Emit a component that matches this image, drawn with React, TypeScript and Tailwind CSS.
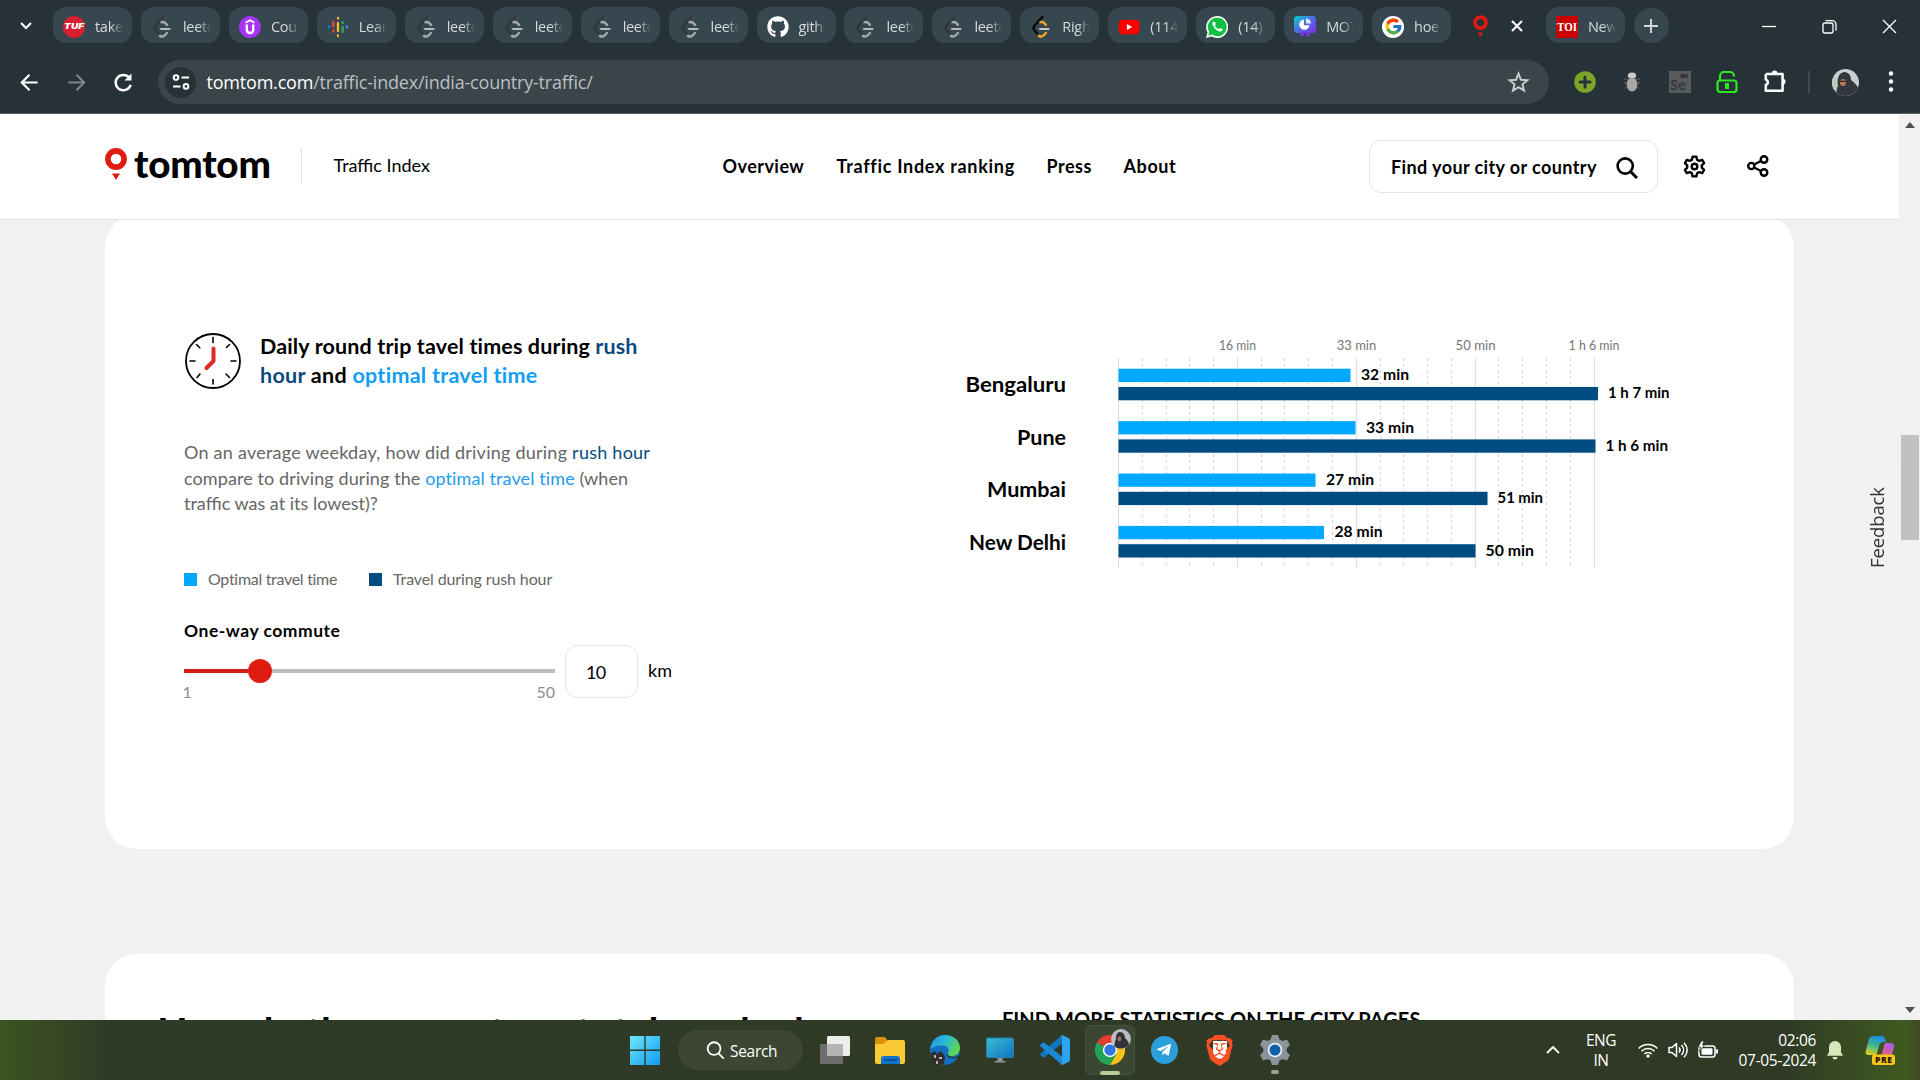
import React from "react";
import { FaGithub, FaYoutube, FaTelegramPlane } from "react-icons/fa";
import { FcGoogle } from "react-icons/fc";
import { SiBrave } from "react-icons/si";

const GEO = "font-['Lato','Liberation_Sans',sans-serif]";
const UI = "font-['Open_Sans','Noto_Sans',sans-serif]";

/* ---------- favicons ---------- */

function LeetCode({ color = false }: { color?: boolean }) {
  return (
    <svg viewBox="0 0 22 22" className="h-[22px] w-[22px]" fill="none" strokeLinecap="round" strokeWidth="2.5">
      <path d="M12.300 1.200 4.700 9.300c-1.500 1.700-1.500 3.700 0 5.400l2.600 2.800" stroke={color ? "#0b0b0b" : "#33383b"} />
      <path d="M10.500 6.200c1.500-.6 2.600-.3 3.600.7l1.800 1.900" stroke={color ? "#f5a12b" : "#a2a8ab"} />
      <path d="M9 20c1.800.8 3.600.5 5-1l1.900-2" stroke={color ? "#f5a12b" : "#a2a8ab"} />
      <path d="M10 13h8.500" stroke={color ? "#c8c8c8" : "#b4babd"} strokeWidth="2.200" />
    </svg>
  );
}

function TufIcon() {
  return (
    <svg viewBox="0 0 22 22" className="h-[22px] w-[22px]">
      <circle cx="11" cy="11" r="11" fill="#d81f30" />
      <text x="11" y="13.4" textAnchor="middle" fontSize="7.5" fontWeight="900" fontStyle="italic" fill="#fff" fontFamily="Inter" textLength="20" lengthAdjust="spacingAndGlyphs">
        TUF
      </text>
    </svg>
  );
}

function UdemyIcon() {
  return (
    <svg viewBox="0 0 22 22" className="h-[22px] w-[22px]" fill="none" stroke="#fff">
      <circle cx="11" cy="11" r="11" fill="#a435f0" stroke="none" />
      <path d="m6.600 6.800 4.400-2.600 4.400 2.600" strokeWidth="1.8" />
      <path d="M7.800 8.600v5.200a3.200 3.200 0 0 0 6.400 0V8.600" strokeWidth="2.4" />
    </svg>
  );
}

function PodcastIcon() {
  return (
    <svg viewBox="0 0 22 22" className="h-[22px] w-[22px]" strokeWidth="2.3" strokeLinecap="round">
      <path d="M11 2v.6M11 7v8M11 19.4v.6" stroke="#f9bb2d" />
      <path d="M6.4 5.6v5M6.4 14.5v1.3" stroke="#ea4335" />
      <path d="M15.6 6.2v1M15.6 11v5" stroke="#34a853" />
      <path d="M2 10.4v1" stroke="#1a73e8" />
      <path d="M20 10.4v1" stroke="#4285f4" />
    </svg>
  );
}

function ChartBadgeIcon() {
  return (
    <svg viewBox="0 0 22 22" className="h-[22px] w-[22px]">
      <defs>
        <linearGradient id="badge" x1="0" y1="0" x2="1" y2="1">
          <stop offset="0" stopColor="#05d0cf" />
          <stop offset=".5" stopColor="#4a6be8" />
          <stop offset="1" stopColor="#8a2be8" />
        </linearGradient>
      </defs>
      <rect width="22" height="17" rx="3.5" fill="url(#badge)" />
      <path d="m7 16-1 5 3-1 2-3 2 3 3 1-1-5z" fill="#7a35e0" />
      <path d="M10 3.400a5.200 5.200 0 1 0 5.600 5.800H10z" fill="#fff" />
      <path d="M12 2.400v5h5a5 5 0 0 0-5-5z" fill="#dfeaff" />
    </svg>
  );
}

function Pin({ className }: { className: string }) {
  return (
    <svg viewBox="0 0 22 32" className={className}>
      <circle cx="11" cy="11" r="8.1" fill="none" stroke="#df1b12" strokeWidth="5.6" />
      <path d="M7 25.4h8l-4 6.6z" fill="#df1b12" />
    </svg>
  );
}

function ToiIcon() {
  return (
    <svg viewBox="0 0 22 22" className="h-[22px] w-[22px]">
      <rect width="22" height="22" fill="#c90000" />
      <text x="11" y="14.6" textAnchor="middle" fontSize="11.5" fontWeight="700" fill="#fff" fontFamily="Liberation Serif" textLength="20" lengthAdjust="spacingAndGlyphs">
        TOI
      </text>
    </svg>
  );
}

function YouTubeIcon() {
  return (
    <span className="relative flex h-[22px] w-[22px] items-center justify-center">
      <span className="absolute h-2.5 w-2.5 bg-white" />
      <FaYoutube className="relative h-[22px] w-[22px] text-[#f00]" />
    </span>
  );
}

function WhatsAppIcon() {
  return (
    <svg viewBox="0 0 22 22" className="h-[22px] w-[22px]">
      <path d="M11 0a11 11 0 0 0-9.5 16.4L0 22l5.7-1.5A11 11 0 1 0 11 0z" fill="#f4fff6" />
      <path d="M11 1.8a9.2 9.2 0 0 0-7.8 14L2.300 19.700l4-1.100A9.200 9.200 0 1 0 11 1.800z" fill="#0fc143" />
      <path d="M7.400 5.600c-1.500 1-1.300 3.200.7 5.800 2.200 3 5 4.500 6.800 4 1.500-.5 2-1.800 1.600-2.300l-2.300-1.200-1.300 1.400c-2-.8-3.200-2-4-3.800l1-1.300-1-2.400z" fill="#fff" />
    </svg>
  );
}

function GoogleIcon() {
  return (
    <span className="flex h-[22px] w-[22px] items-center justify-center rounded-full bg-white">
      <FcGoogle className="h-[19px] w-[19px]" />
    </span>
  );
}

const leet = { icon: <LeetCode />, label: "leetc" };

const tabs: { icon: React.ReactNode; label: string }[] = [
  { icon: <TufIcon />, label: "take" },
  leet,
  { icon: <UdemyIcon />, label: "Cou" },
  { icon: <PodcastIcon />, label: "Lear" },
  leet,
  leet,
  leet,
  leet,
  { icon: <FaGithub className="h-[22px] w-[22px] text-white" />, label: "gith" },
  leet,
  leet,
  { icon: <LeetCode color />, label: "Righ" },
  { icon: <YouTubeIcon />, label: "(114" },
  { icon: <WhatsAppIcon />, label: "(14)" },
  { icon: <ChartBadgeIcon />, label: "MOT" },
  { icon: <GoogleIcon />, label: "hoe" },
];

function Tab({ icon, label }: { icon: React.ReactNode; label: string }) {
  return (
    <div className="mr-[8.950px] flex h-9 w-[79px] shrink-0 items-center rounded-[13px] bg-[#37474f] pt-[3px] pl-2.5">
      {icon}
      <span className="ml-[10px] w-[28px] overflow-hidden pt-px text-[14.5px] leading-5 tracking-[-0.3px] whitespace-nowrap text-[#d5dadc] [mask-image:linear-gradient(90deg,#000_55%,transparent)]">
        {label}
      </span>
    </div>
  );
}

function TabStrip() {
  return (
    <div className="flex h-[51px] items-start pt-[7px]">
      <svg viewBox="0 0 12 12" className="mt-[13px] ml-5 h-3 w-3" fill="none" stroke="#fff" strokeWidth="2.2">
        <path d="m1 3 5 5 5-5" />
      </svg>
      <div className="ml-[21px] flex">
        {tabs.map((t, i) => (
          <Tab key={i} {...t} />
        ))}
        <div className="flex h-9 w-[86px] items-center pt-[2px] pl-[13px]">
          <Pin className="h-[22px] w-[15px]" />
          <svg viewBox="0 0 12 12" className="ml-[23px] h-3 w-3" fill="none" stroke="#fff" strokeWidth="2.1">
            <path d="m1 1 10 10M11 1 1 11" />
          </svg>
        </div>
        <Tab icon={<ToiIcon />} label="New" />
        <div className="mt-px flex h-[35px] w-[35px] items-center justify-center rounded-full bg-[#37474f]">
          <svg viewBox="0 0 14 14" className="h-3.5 w-3.5" stroke="#d5dadc" strokeWidth="1.9">
            <path d="M7 0v14M0 7h14" />
          </svg>
        </div>
      </div>
      <svg viewBox="0 0 140 16" className="mt-[12px] ml-[92px] h-4 w-[140px]" fill="none" stroke="#fff" strokeWidth="1.3">
        <path d="M1 7.500h14" />
        <rect x="62" y="4" width="10" height="10" rx="2" />
        <path d="M64.500 1.600h6.500a4 4 0 0 1 4 4v6.200" />
        <path d="m122 1 13 13M135 1l-13 13" />
      </svg>
    </div>
  );
}

function Toolbar() {
  return (
    <div className="flex h-[62px] items-center">
      <svg viewBox="0 0 24 24" className="ml-[18px] h-[23px] w-[23px]" fill="none" stroke="#fff" strokeWidth="2.300">
        <path d="M20.500 12H4M12 4l-8 8 8 8" />
      </svg>
      <svg viewBox="0 0 24 24" className="ml-6 h-[23px] w-[23px]" fill="none" stroke="#7d858a" strokeWidth="2.300">
        <path d="M3.500 12H20M12 4l8 8-8 8" />
      </svg>
      <svg viewBox="0 0 24 24" className="ml-[24px] h-[23px] w-[23px]" fill="none" stroke="#fff" strokeWidth="2.600">
        <path d="M19.500 14.500A8 8 0 1 1 18 7" />
        <path d="M20.300 2.500v7.300H13z" fill="#fff" stroke="none" />
      </svg>
      <div className="ml-[23px] flex h-11 w-[1391px] items-center rounded-full bg-[#3a4449] pl-[7px]">
        <div className="flex h-[31px] w-[31px] items-center justify-center rounded-full bg-[#263238]">
          <svg viewBox="0 0 18 16" className="h-4 w-[18px]" fill="none" stroke="#fff" strokeWidth="2">
            <circle cx="4" cy="3.600" r="2.300" />
            <path d="M9.500 3.600H17M1 12.400h7.500" />
            <circle cx="14" cy="12.400" r="2.300" />
          </svg>
        </div>
        <span className="ml-[10.500px] flex-1 text-[18px] leading-6 tracking-[-0.2px] whitespace-nowrap text-[#b9c0c3]">
          <span className="text-white">tomtom.com</span>/traffic-index/india-country-traffic/
        </span>
        <svg viewBox="0 0 24 24" className="mr-[19px] h-[23px] w-[23px]" fill="none" stroke="#c8cdd0" strokeWidth="2">
          <path d="m12 2.800 2.500 6.300 6.800.5-5.200 4.300 1.700 6.600L12 16.900l-5.800 3.600 1.700-6.600-5.200-4.300 6.800-.5z" />
        </svg>
      </div>
      <svg viewBox="0 0 22 22" className="ml-[24.500px] h-[22px] w-[22px]">
        <circle cx="11" cy="11" r="10.800" fill="#7ba428" />
        <path d="M11 6v10M6 11h10" stroke="#263238" strokeWidth="3" strokeLinecap="round" />
      </svg>
      <svg viewBox="0 0 22 22" className="ml-[25px] h-[22px] w-[22px]">
        <path d="M3 8h4M2.500 12h4M4 17l3-1M19 8h-4M19.500 12h-4M18 17l-3-1" stroke="#4a545a" strokeWidth="1.500" />
        <ellipse cx="11" cy="4.500" rx="4.200" ry="3" fill="#c9c9c9" />
        <ellipse cx="11" cy="13.500" rx="5.300" ry="7" fill="#a9a6a4" />
      </svg>
      <svg viewBox="0 0 22 22" className="ml-[26px] h-[22px] w-[22px]">
        <rect width="22" height="22" fill="#57595b" />
        <text x="1" y="19" fontSize="14" fontWeight="700" fill="#353c41" fontFamily="Open Sans">Se</text>
        <path d="M11.500 3h5v4h-5zM16 5l3-2v4z" fill="#30373b" />
      </svg>
      <svg viewBox="0 0 22 22" className="ml-[25px] h-[22px] w-[22px]" fill="none" stroke="#2fe81f" strokeWidth="2.200">
        <rect x="1.500" y="9.500" width="19" height="11.500" rx="2.500" />
        <path d="M4 9.500V5a4 4 0 0 1 4-4h6a4 4 0 0 1 4 4v.5" />
        <path d="M11 12v6" strokeWidth="4" />
      </svg>
      <svg viewBox="0 0 24 24" className="-mt-0.5 ml-[24px] h-[26px] w-[26px]" fill="none" stroke="#fff" strokeWidth="2.300" strokeLinejoin="round">
        <path d="M3.500 5.500h15.500v5.200M19 15v6H3.500v-5.300a2.600 2.600 0 0 0 0-5V5.500" />
        <path d="M9 5a2.700 2.700 0 0 1 5.400 0zM19 10a2.700 2.700 0 0 1 0 5.400z" fill="#fff" stroke="none" />
        <path d="M19 10v6" />
      </svg>
      <div className="ml-[20px] h-[22px] w-[2px] bg-[#3d4a51]" />
      <svg viewBox="0 0 27 27" className="ml-[22px] h-[27px] w-[27px]">
        <defs>
          <clipPath id="avatarClip"><circle cx="13.500" cy="13.500" r="13.500" /></clipPath>
        </defs>
        <g clipPath="url(#avatarClip)">
          <rect width="27" height="27" fill="#c9ced2" />
          <path d="M0 10 6 8l2 8-8 6z" fill="#b9cbb6" />
          <path d="M4 27c1-4 0-7 2-10-1-6 0-13 6-14 5 0 7 4 7 8 3 2 6 5 8 10v6z" fill="#33363c" />
          <ellipse cx="11" cy="13.500" rx="3" ry="3.600" fill="#b47a5e" />
          <path d="M8 12.300h6" stroke="#222" strokeWidth="1.300" />
        </g>
      </svg>
      <svg viewBox="0 0 6 24" className="ml-[29.500px] h-6 w-1.5" fill="#fff">
        <circle cx="3" cy="3.500" r="2.200" />
        <circle cx="3" cy="11.500" r="2.200" />
        <circle cx="3" cy="19.500" r="2.200" />
      </svg>
    </div>
  );
}

/* ---------- site ---------- */

function SiteHeader() {
  return (
    <header className="flex h-[106px] w-[1899px] items-start border-b border-[#e2e2e2] bg-white pt-[26px] text-black">
      <Pin className="mt-[8px] ml-[105px] h-8 w-[22px]" />
      <span className="mt-[0.500px] ml-[7px] w-[140px] text-[38.500px] leading-[44px] font-black tracking-[-0.2px]">tomtom</span>
      <div className="mt-2 ml-[27px] h-9 w-px bg-[#e2e2e2]" />
      <span className="mt-[13px] ml-[31.500px] w-[389px] text-[18px] leading-6">Traffic Index</span>
      <nav className="mt-[14px] flex text-[18px] leading-6 font-bold whitespace-nowrap">
        <span className="w-[114px] tracking-[0.46px]">Overview</span>
        <span className="w-[210px] tracking-[0.7px]">Traffic Index ranking</span>
        <span className="w-[77px] tracking-[0.5px]">Press</span>
        <span className="w-[245.500px] tracking-[0.6px]">About</span>
      </nav>
      <div className="flex h-[53px] w-[289px] items-center justify-between rounded-xl border border-[#e4e4e4] pr-[19px] pl-[21px]">
        <span className="mt-0.5 text-[18px] font-bold tracking-[0.4px] whitespace-nowrap">Find your city or country</span>
        <svg viewBox="0 0 22 22" className="mt-0.5 h-[22px] w-[22px]" fill="none" stroke="#000" strokeWidth="2.600">
          <circle cx="9.200" cy="9" r="7.600" />
          <path d="m14.500 14.500 6.500 6.500" strokeWidth="3" />
        </svg>
      </div>
      <svg viewBox="0 0 24 24" className="mt-[14px] ml-[24px] h-[25px] w-[25px]" fill="none" stroke="#000" strokeWidth="2.300" strokeLinejoin="round">
        <path d="M10.200 2.500h3.600l.7 3 1.900 1.100 3-.9 1.800 3.100-2.200 2.100v2.200l2.200 2.100-1.800 3.100-3-.9-1.900 1.100-.7 3h-3.600l-.7-3-1.900-1.100-3 .9-1.800-3.100L5 13.100v-2.200L2.800 8.800l1.800-3.100 3 .9 1.900-1.100z" />
        <circle cx="12" cy="12" r="2.700" />
      </svg>
      <svg viewBox="0 0 22 22" className="mt-[15px] ml-[40px] h-[22px] w-[22px]" fill="none" stroke="#000" strokeWidth="2.400">
        <circle cx="4.300" cy="11" r="3.100" />
        <circle cx="17" cy="4.500" r="3.300" />
        <circle cx="17" cy="17.500" r="3.300" />
        <path d="m7 9.500 7-3.500M7 12.500l7 3.500" />
      </svg>
    </header>
  );
}

function Clock() {
  return (
    <svg viewBox="0 0 56 56" className="ml-px h-14 w-14" fill="none" stroke="#000">
      <circle cx="28" cy="28" r="27" strokeWidth="1.800" />
      <g strokeWidth="1.600" strokeLinecap="round">
        <path d="M28 4.500v5M28 46.500v4.500M5 28h5M46 28h5" />
        <path d="m11.500 11.500 3.300 3.300M41.500 14.500l3-3M12 44.500l3-3.500M41 41l3.500 3.500" />
      </g>
      <path d="M28.500 15.500v12.500l-7 7" stroke="#df2a26" strokeWidth="4" strokeLinecap="round" strokeLinejoin="round" />
    </svg>
  );
}

const cities = [
  { name: "Bengaluru", w: 100.500, opt: 232, optL: "32 min", rush: 479.500, rushL: "1 h 7 min", rw: 61.500 },
  { name: "Pune", w: 49, opt: 237, optL: "33 min", rush: 477, rushL: "1 h 6 min", rw: 62.500 },
  { name: "Mumbai", w: 79, opt: 197, optL: "27 min", rush: 369, rushL: "51 min", rw: 45.500 },
  { name: "New Delhi", w: 97, opt: 205.500, optL: "28 min", rush: 357, rushL: "50 min", rw: 48.500 },
];
const axis = [
  { x: 119, l: "16 min", w: 37 },
  { x: 238, l: "33 min", w: 39.500 },
  { x: 357, l: "50 min", w: 40 },
  { x: 475.500, l: "1 h 6 min", w: 51 },
];

function TravelChart() {
  return (
    <svg width="760" height="260" viewBox="0 0 760 260" fontFamily="Lato, Liberation Sans, sans-serif">
      <g transform="translate(179.500 0)">
        {Array.from({ length: 21 }, (_, i) => {
          const major = i % 5 === 0;
          return (
            <line
              key={i}
              x1={Math.round(i * 23.780)}
              x2={Math.round(i * 23.780)}
              y1="38"
              y2="248"
              stroke={major ? "#dcdee0" : "#d8dadc"}
              strokeWidth="1.200"
              strokeDasharray={major ? undefined : "3 3"}
            />
          );
        })}
        {axis.map((a) => (
          <text key={a.l} x={a.x} y="30" textAnchor="middle" fontSize="13.500" fill="#767676" textLength={a.w} lengthAdjust="spacingAndGlyphs">
            {a.l}
          </text>
        ))}
        {cities.map((c, i) => {
          const y = 48.700 + i * 52.400;
          return (
            <g key={c.name} fontWeight="700">
              <text x="-52.500" y={y + 23.700} textAnchor="end" fontSize="21.500" textLength={c.w} lengthAdjust="spacingAndGlyphs">
                {c.name}
              </text>
              <rect x="0" y={y} width={c.opt} height="13.300" fill="#00a8ff" />
              <rect x="0" y={y + 18.300} width={c.rush} height="13.300" fill="#004b7f" />
              <text x={c.opt + 10.500} y={y + 11.400} fontSize="15.500" textLength="48" lengthAdjust="spacingAndGlyphs">
                {c.optL}
              </text>
              <text x={c.rush + 10} y={y + 29.700} fontSize="15.500" textLength={c.rw} lengthAdjust="spacingAndGlyphs">
                {c.rushL}
              </text>
            </g>
          );
        })}
      </g>
    </svg>
  );
}

function TravelCard() {
  return (
    <section className="-mt-[5px] flex h-[634px] w-[1689px] rounded-[32px] bg-white">
      <div className="ml-[79px] w-[755px] pt-[118px]">
        <div className="flex h-14">
          <Clock />
          <h2 className="-mt-px ml-[19px] text-[21.500px] leading-[29px] font-bold tracking-[0.14px] whitespace-nowrap text-black">
            Daily round trip tavel times during <span className="text-[#0b4a7f]">rush</span>
            <br />
            <span className="tracking-[0.28px]">
              <span className="text-[#0b4a7f]">hour</span> and <span className="text-[#109df5]">optimal travel time</span>
            </span>
          </h2>
        </div>
        <p className="mt-[51px] text-[18px] leading-[25.500px] tracking-[0.24px] whitespace-nowrap text-[#666]">
          On an average weekday, how did driving during <span className="text-[#0b4a7f]">rush hour</span>
          <br />
          <span className="tracking-[0.1px]">
            compare to driving during the <span className="text-[#1f9bf0]">optimal travel time</span> (when
          </span>
          <br />
          <span className="tracking-[0px]">traffic was at its lowest)?</span>
        </p>
        <div className="mt-[50.500px] flex h-6 items-center text-[16px] text-[#666]">
          <i className="h-[13px] w-[13px] bg-[#00a8ff]" />
          <span className="-mt-px ml-[11px] w-[161px] tracking-[-0.3px]">Optimal travel time</span>
          <i className="h-[13px] w-[13px] bg-[#004b7f]" />
          <span className="-mt-px ml-[11px] tracking-[-0.12px]">Travel during rush hour</span>
        </div>
        <div className="mt-[28px] text-[17.500px] leading-6 font-bold tracking-[0.52px] text-black">One-way commute</div>
        <div className="mt-[2px] flex">
          <div className="w-[371px] pt-[14px]">
            <div className="flex h-6 items-center">
              <div className="h-1 w-[63.500px] bg-[#d31d17]" />
              <div className="h-6 w-6 rounded-full bg-[#df1b12]" />
              <div className="h-1 flex-1 bg-[#bdbdbd]" />
            </div>
            <div className="-mt-px flex justify-between text-[16px] leading-5 text-[#8d8d8d]">
              <span className="-ml-[1.5px]">1</span>
              <span>50</span>
            </div>
          </div>
          <div className="ml-2.5 h-[53px] w-[73px] rounded-xl border border-[#e4e4e4] pt-[14px] pl-[20px] text-[18px] leading-6 tracking-[-0.7px] text-black">10</div>
          <span className="mt-[13px] ml-[10px] text-[18px] leading-6 text-black">km</span>
        </div>
      </div>
      <div className="pt-[105px]">
        <TravelChart />
      </div>
    </section>
  );
}

function NextCard() {
  return (
    <section className="mt-[105px] flex h-[66px] w-[1689px] overflow-hidden rounded-t-[32px] bg-white font-bold whitespace-nowrap text-black">
      <h2 className="ml-[52px] flex w-[845px] pt-[54px] text-[40px] leading-[48px]">
        <span className="w-[259px]">How do the </span>
        <span className="w-[160px]">most </span>
        <span className="w-[109px]">total </span>
        <span className="w-[109px]">rush </span>
        <span>hour</span>
      </h2>
      <h3 className="pt-[51px] text-[20px] leading-7 tracking-[0.05px]">FIND MORE STATISTICS ON THE CITY PAGES</h3>
    </section>
  );
}

function Scrollbar() {
  return (
    <div className="flex h-[906px] w-[21px] flex-col items-center bg-[#f1f1f1]">
      <div className="mt-[8px] border-x-[5px] border-b-[6px] border-x-transparent border-b-[#505050]" />
      <div className="mt-[307px] h-[105px] w-[18px] bg-[#c1c1c1]" />
      <div className="mt-[467px] border-x-[5px] border-t-[6px] border-x-transparent border-t-[#505050]" />
    </div>
  );
}

/* ---------- taskbar ---------- */

function TaskbarApps() {
  return (
    <div className="flex h-[60px] items-center">
      <svg viewBox="0 0 30 30" className="ml-[630px] h-[30px] w-[30px]">
        <defs>
          <linearGradient id="win" x1="0" y1="0" x2="1" y2="1">
            <stop offset="0" stopColor="#6fe8fb" />
            <stop offset="1" stopColor="#0f9bf2" />
          </linearGradient>
        </defs>
        <path d="M0 1h14.300v13.500H0zM15.700 1H30v13.500H15.700zM0 16h14.300v14H0zM15.700 16H30v14H15.700z" fill="url(#win)" />
      </svg>
      <div className="ml-[18px] flex h-10 w-[125px] items-center rounded-full bg-[#3c4633] pl-[27.500px] text-[15.500px] text-white">
        <svg viewBox="0 0 20 20" className="h-[19px] w-[19px] shrink-0" fill="none" stroke="#fff" strokeWidth="1.900">
          <circle cx="8.500" cy="8" r="6.700" />
          <path d="m13.200 13 5.500 5.500" />
        </svg>
        <span className="mt-1 ml-[5.500px] tracking-[-0.3px]">Search</span>
      </div>
      <svg viewBox="0 0 30 30" className="ml-[17px] h-[30px] w-[30px]">
        <rect x="0" y="9" width="23" height="20" rx="1.500" fill="#6d6d6d" />
        <rect x="7" y="1" width="23" height="20" rx="1.500" fill="#ededed" />
        <rect x="7" y="9" width="16" height="12" fill="#b5b5b5" />
      </svg>
      <svg viewBox="0 0 30 30" className="ml-[25px] h-[30px] w-[30px]">
        <path d="M0 4a2 2 0 0 1 2-2h8l3 4-3 4H0z" fill="#d9920d" />
        <path d="M0 9h8l5-4h15a2 2 0 0 1 2 2v20a2 2 0 0 1-2 2H2a2 2 0 0 1-2-2z" fill="#fbc934" />
        <path d="M6 29v-5a3 3 0 0 1 3-3h13a3 3 0 0 1 3 3v5z" fill="#1173c7" />
        <path d="M9 25h13" stroke="#0a4c8c" strokeWidth="1.600" />
      </svg>
      <svg viewBox="0 0 30 30" className="ml-[25px] h-[30px] w-[30px]">
        <defs>
          <linearGradient id="edge" x1="0" y1="0" x2="1" y2=".5">
            <stop offset="0" stopColor="#1b8fe0" />
            <stop offset=".5" stopColor="#27b8d8" />
            <stop offset="1" stopColor="#5fd84f" />
          </linearGradient>
        </defs>
        <circle cx="15" cy="15" r="14.800" fill="#1370c4" />
        <path d="M.3 14C1 6 7 0 15 0c9 0 15 6 15 13 0 5-4 8-8.500 8-3.500 0-4.500-1.500-3.500-3 1.500-2.500 1-7-4.500-7.500C8 10 3 12 .3 14z" fill="url(#edge)" />
        <path d="M17.500 18.500c0 2.500 6 5.500 11.500 2.200l1 1.300-4 1.200c-4 .8-8-.5-9-2.700-.5-1-.3-1.500.5-2z" fill="#2f3a27" />
        <path d="m1 18 4-2 2 3 3-3 3 2 2 4-1 7H3z" fill="#2b2f33" />
        <path d="M4 20h2v3H4zM9 22h3v2H9zM6 26h2v3H6z" fill="#c6a79a" />
      </svg>
      <svg viewBox="0 0 28 30" className="ml-[26px] h-[30px] w-7">
        <defs>
          <linearGradient id="mon" x1="0" y1="0" x2="1" y2="1">
            <stop offset="0" stopColor="#35bfd0" />
            <stop offset="1" stopColor="#1272c4" />
          </linearGradient>
        </defs>
        <rect x=".5" y="3" width="27" height="19.500" rx="1" fill="url(#mon)" stroke="#2a7fa8" />
        <path d="M11.500 23h5v3h3v1.500h-11V26h3z" fill="#8e979b" />
      </svg>
      <svg viewBox="0 0 30 30" className="ml-[26px] h-[30px] w-[30px]">
        <path d="M22 0v8.500L4.500 22.200a1.500 1.500 0 0 1-1.900 0L.6 20.400a1.300 1.300 0 0 1 0-1.900z" fill="#1276be" />
        <path d="M22 30v-8.500L4.500 7.800a1.500 1.500 0 0 0-1.900 0L.6 9.600a1.300 1.300 0 0 0 0 1.900z" fill="#1a8ad4" />
        <path d="M22 30c-.8 0-1.300-.3-1.800-.8.8.8 1.800.3 1.800-.8V1.600c0-1.100-1-1.600-1.800-.8.500-.6 1.200-.9 2.100-.7L28.500 3c.9.400 1.500 1.200 1.500 2.200v19.600c0 1-.6 1.800-1.500 2.200z" fill="#2ba4ee" />
      </svg>
      <div className="relative ml-[15px] flex h-[50px] w-[50px] items-center justify-center rounded-md border border-[#475140] bg-[#3b4633]">
        <svg viewBox="0 0 30 30" className="h-[30px] w-[30px]">
          <path d="M15 15 2 7.500A15 15 0 0 1 28 7.500z" fill="#e33b2e" />
          <path d="M15 15 2 7.500A15 15 0 0 0 15 30l6.500-11z" fill="#23a455" />
          <path d="M15 15 28 7.500A15 15 0 0 1 15 30l6.500-11z" fill="#fbc116" />
          <circle cx="15" cy="15" r="7.200" fill="#fff" />
          <circle cx="15" cy="15" r="5.700" fill="#3277e3" />
        </svg>
        <svg viewBox="0 0 20 20" className="absolute top-[3px] right-[3px] h-5 w-5">
          <circle cx="10" cy="10" r="10" fill="#b9bdc1" />
          <path d="M3 17c1-3 1-5 2-7 0-4 1-7 4-7s5 3 5 6c2 2 4 4 4 7-4 4-10 5-15 1z" fill="#303238" />
          <ellipse cx="8.500" cy="10" rx="1.900" ry="2.400" fill="#9d725e" />
        </svg>
        <div className="absolute -bottom-px h-1 w-5 rounded-full bg-[#b7cc97]" />
      </div>
      <div className="ml-[16px] flex h-7 w-[27px] items-center justify-center rounded-full bg-[#2a9fdb]">
        <FaTelegramPlane className="mr-0.5 h-4 w-4 text-white" />
      </div>
      <div className="relative ml-[26px] flex h-[30px] w-[31px] items-center justify-center">
        <div className="absolute top-[6px] h-[18px] w-[14px] rounded-b-full bg-white" />
        <SiBrave className="relative h-[31px] w-[31px] text-[#fb4f24]" />
      </div>
      <div className="relative ml-[24px] flex h-[60px] w-8 items-center justify-center">
        <svg viewBox="0 0 30 30" className="h-[30px] w-[30px]">
          <path d="m12 0 6 0 1.500 4.500 3 1.500 4.500-1.500 3 5.500-3.300 3.300v3.400L30 20l-3 5.500-4.500-1.500-3 1.500L18 30h-6l-1.500-4.500-3-1.500L3 25.500 0 20l3.300-3.300v-3.400L0 10l3-5.500L7.500 6l3-1.500z" fill="#8b939b" />
          <circle cx="15" cy="15" r="7.300" fill="#e8eef3" />
          <circle cx="15" cy="15" r="5.500" fill="#0e5fa8" />
        </svg>
        <div className="absolute bottom-[6px] h-1 w-2 rounded-full bg-[#9aa392]" />
      </div>
    </div>
  );
}

function Tray() {
  return (
    <div className="flex h-[60px] items-center text-[15.500px] leading-5 text-white">
      <svg viewBox="0 0 14 8" className="h-2 w-3.5" fill="none" stroke="#fff" strokeWidth="1.900">
        <path d="m1 7 6-6 6 6" />
      </svg>
      <div className="ml-[25px] w-[32px] text-center leading-[20px] tracking-[-0.5px]">
        ENG
        <br />
        IN
      </div>
      <svg viewBox="0 0 20 16" className="ml-[21px] h-4 w-5" fill="none" stroke="#fff" strokeWidth="1.500">
        <path d="M.7 6.500a13 13 0 0 1 18.600 0M3.500 9.300a9.200 9.200 0 0 1 13 0M6.300 12a5.200 5.200 0 0 1 7.400 0" />
        <circle cx="10" cy="14" r="1.700" fill="#fff" stroke="none" />
      </svg>
      <svg viewBox="0 0 20 18" className="ml-[10px] h-[18px] w-5" fill="none" stroke="#fff" strokeWidth="1.500">
        <path d="M1 6.500h3l4.500-4v13L4 11.500H1z" strokeLinejoin="round" />
        <path d="M11 6.500c1.300 1.500 1.300 3.500 0 5M13.500 4c2.800 3 2.800 7 0 10M16 1.700c4.200 4.500 4.200 10.200 0 14.600" />
      </svg>
      <svg viewBox="0 0 20 17" className="-mt-0.5 ml-[10px] h-[17px] w-5">
        <rect x="1" y="5" width="16" height="11" rx="2.500" fill="none" stroke="#fff" strokeWidth="1.500" />
        <rect x="3.500" y="7.300" width="11" height="6.500" rx="1" fill="#fff" />
        <path d="M18 8.500h2v4h-2z" fill="#fff" />
        <path d="M3.500 0 0 6h2.500L1.500 10.500 6.500 4H4.500L6 0z" fill="#fff" stroke="#2f3a27" strokeWidth=".8" />
      </svg>
      <div className="w-[98px] text-right leading-[20px] tracking-[-0.35px]">
        02:06
        <br />
        07-05-2024
      </div>
      <svg viewBox="0 0 16 20" className="ml-[11px] h-5 w-4" fill="#d9e8ba">
        <path d="M8 1a6 6 0 0 0-6 6v5L0 15.800h16L14 12V7a6 6 0 0 0-6-6zM5.500 17h5a2.500 2.500 0 0 1-5 0z" />
      </svg>
      <svg viewBox="0 0 30 30" className="ml-[22px] h-[30px] w-[30px]">
        <defs>
          <linearGradient id="copA" x1=".5" y1="0" x2=".2" y2="1">
            <stop offset="0" stopColor="#1d8de6" />
            <stop offset=".5" stopColor="#3fb98a" />
            <stop offset="1" stopColor="#e5d01e" />
          </linearGradient>
          <linearGradient id="copB" x1=".7" y1="0" x2=".3" y2="1">
            <stop offset="0" stopColor="#a95bea" />
            <stop offset="1" stopColor="#f2606f" />
          </linearGradient>
        </defs>
        <path d="M8 1h9c2.500 0 3 2 4 6h-3c-2 0-3 1-4 4l-2 7c-.5 2-1.500 2-3 2H4c-3 0-4-2-3-5L4 4c.7-2 2-3 4-3z" fill="url(#copA)" />
        <path d="M20 8h6c2.500 0 3.500 2 2.800 4.500L27 19c-.6 2-2 3-4 3h-9c2 0 2.500-2 3-4l2-7z" fill="url(#copB)" />
        <rect x="7" y="19.500" width="23" height="10.500" rx="2.500" fill="#fdc516" />
        <text x="18.500" y="28" textAnchor="middle" fontSize="8.500" fontWeight="800" fill="#221c05" fontFamily="Open Sans" textLength="17">PRE</text>
      </svg>
    </div>
  );
}

export default function App() {
  return (
    <div className={`h-[1080px] w-[1920px] overflow-hidden bg-[#f1f1f1] ${GEO}`}>
      <div className={`h-[114px] border-b border-[#596367] bg-[#263238] ${UI}`}>
        <TabStrip />
        <Toolbar />
      </div>
      <div className="flex h-[906px] overflow-hidden">
        <div className="relative w-[1899px]">
          <div className="relative z-10">
            <SiteHeader />
          </div>
          <main className="ml-[105px]">
            <TravelCard />
            <NextCard />
          </main>
          <div className={`absolute top-[350px] right-0 flex h-[128px] w-[45px] items-center justify-center rounded-l-2xl bg-[#f2f2f4] ${UI}`}>
            <span className="rotate-180 text-[18.500px] leading-6 font-medium tracking-[-0.1px] text-[#333] [writing-mode:vertical-rl]">Feedback</span>
          </div>
        </div>
        <Scrollbar />
      </div>
      <footer
        className={`flex h-[60px] bg-[linear-gradient(90deg,#3b5420_0px,#303b27_110px,#2f3926_1780px,#3f5a20_1905px,#41491f_1920px)] ${UI}`}
      >
        <div className="w-[1546px]">
          <TaskbarApps />
        </div>
        <Tray />
      </footer>
    </div>
  );
}
